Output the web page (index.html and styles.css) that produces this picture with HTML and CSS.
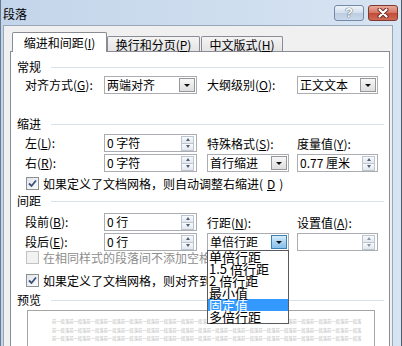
FILE: index.html
```html
<!DOCTYPE html>
<html lang="zh-CN">
<head>
  <meta charset="UTF-8" />
  <title>段落</title>
  <link rel="stylesheet" href="styles.css">
</head>
<body>
  <div class="window">
    <div class="titlebar">
      <span class="title">段落</span>
      <div class="caption">
        <span class="cap-btn help">?</span>
        <span class="cap-btn close">
          <svg width="14" height="10" viewBox="0 0 14 10"><path d="M3.5 1.5 L10.5 8.5 M10.5 1.5 L3.5 8.5" stroke="#6b2a20" stroke-width="4" stroke-linecap="round"/><path d="M3.5 1.5 L10.5 8.5 M10.5 1.5 L3.5 8.5" stroke="#fff" stroke-width="2.2" stroke-linecap="round"/></svg>
        </span>
      </div>
    </div>
    <div class="client">
      <div class="tabs">
        <div class="tab active">缩进和间距(<u>I</u>)</div>
        <div class="tab t2">换行和分页(<u>P</u>)</div>
        <div class="tab t3">中文版式(<u>H</u>)</div>
      </div>
      <div class="panel">
        <div class="group-head"><span>常规</span><i></i></div>
        <div class="grid g1">
          <label>对齐方式(<u>G</u>):</label>
          <div class="field combo w93"><span>两端对齐</span><b class="drop"></b></div>
          <label>大纲级别(<u>O</u>):</label>
          <div class="field combo w81"><span>正文文本</span><b class="drop"></b></div>
        </div>

        <div class="group-head h2"><span>缩进</span><i></i></div>
        <div class="grid g2">
          <label>左(<u>L</u>):</label>
          <div class="field spin w93"><span>0 字符</span><span class="btns"><b class="up"></b><b class="down"></b></span></div>
          <label class="above">特殊格式(<u>S</u>):</label>
          <label class="above">度量值(<u>Y</u>):</label>
          <label>右(<u>R</u>):</label>
          <div class="field spin w93"><span>0 字符</span><span class="btns"><b class="up"></b><b class="down"></b></span></div>
          <div class="field combo w82"><span>首行缩进</span><b class="drop"></b></div>
          <div class="field spin w81"><span>0.77 厘米</span><span class="btns"><b class="up"></b><b class="down"></b></span></div>
        </div>
        <div class="check-row c1"><span class="box checked"><svg width="11" height="11" viewBox="0 0 11 11"><path d="M2 5.5 L4.5 8 L9 2.5" fill="none" stroke="#3b4f77" stroke-width="1.8"/></svg></span>如果定义了文档网格，则自动调整右缩进(<u>D</u>)</div>

        <div class="group-head h3"><span>间距</span><i></i></div>
        <div class="grid g3">
          <label>段前(<u>B</u>):</label>
          <div class="field spin w93"><span>0 行</span><span class="btns"><b class="up"></b><b class="down"></b></span></div>
          <label class="above">行距(<u>N</u>):</label>
          <label class="above">设置值(<u>A</u>):</label>
          <label>段后(<u>E</u>):</label>
          <div class="field spin w93"><span>0 行</span><span class="btns"><b class="up"></b><b class="down"></b></span></div>
          <div class="field combo open w82"><span>单倍行距</span><b class="drop hot"></b>
            <div class="list">
              <div>单倍行距</div>
              <div>1.5 倍行距</div>
              <div>2 倍行距</div>
              <div>最小值</div>
              <div class="sel">固定值</div>
              <div>多倍行距</div>
            </div>
          </div>
          <div class="field spin w81"><span></span><span class="btns dim"><b class="up"></b><b class="down"></b></span></div>
        </div>
        <div class="check-row disabled"><span class="box"></span>在相同样式的段落间不添加空格(<u>C</u>)</div>
        <div class="check-row c3"><span class="box checked"><svg width="11" height="11" viewBox="0 0 11 11"><path d="M2 5.5 L4.5 8 L9 2.5" fill="none" stroke="#3b4f77" stroke-width="1.8"/></svg></span>如果定义了文档网格，则对齐到网格(<u>W</u>)</div>

        <div class="group-head h4"><span>预览</span><i></i></div>
        <div class="preview">
          <p>前一段落前一段落前一段落前一段落前一段落前一段落前一段落前一段落前一段落前一段落前一段落前一段落前一段落前一段落前一段落前一段落前一段落前一段落</p>
          <p>前一段落前一段落前一段落前一段落前一段落前一段落前一段落前一段落前一段落前一段落前一段落前一段落前一段落前一段落前一段落前一段落前一段落前一段落</p>
          <p>前一段落前一段落前一段落前一段落前一段落前一段落前一段落前一段落前一段落前一段落前一段落前一段落前一段落前一段落前一段落前一段落前一段落前一段落</p>
        </div>
      </div>
    </div>
  </div>
</body>
</html>
```

FILE: styles.css
```css
body { margin:0; background:#fff; font-family:"Noto Sans CJK SC", "Liberation Sans", sans-serif; font-size:12px; color:#000; }
u { text-decoration:underline; text-underline-offset:1px; }

.window { width:402px; height:346px; box-sizing:border-box; overflow:hidden; background:linear-gradient(to right, #c3d5ea, #d7e4f2); border-left:1px solid #6b7b8f; border-right:1px solid #4c5a6b; }

.titlebar { height:25px; display:flex; align-items:flex-start; }
.title { margin:7px 0 0 2px; line-height:14px; }
.caption { margin:5px 3px 0 auto; display:flex; gap:4px; }
.cap-btn { width:30px; height:16px; box-sizing:border-box; border-radius:3px; display:flex; align-items:center; justify-content:center; }
.help { border:1px solid #7489a6; background:linear-gradient(#eef3f9, #d3dfee 50%, #bccde2 51%, #c9d8ea); color:#fff; font-family:"Liberation Sans", sans-serif; font-weight:bold; font-size:13px; line-height:14px; text-shadow:0 0 1px #3d4a5c, 0 0 1px #3d4a5c; }
.close { border:1px solid #7d3a30; background:linear-gradient(#e9a99b, #d47565 50%, #c24a38 51%, #cf6a55); }

.client { margin-left:2px; width:390px; height:330px; box-sizing:border-box; background:#f0f0f0; border:1px solid #98a8bb; border-bottom:none; padding:0 2px 0 6px; }

.tabs { height:25px; display:flex; align-items:flex-end; padding-left:2px; }
.tab { height:15px; box-sizing:border-box; border:1px solid #898c95; border-bottom:none; border-radius:2px 2px 0 0; background:linear-gradient(#f4f4f4, #e4e4e4); display:flex; align-items:center; justify-content:center; line-height:13px; }
.tab.active { width:95px; height:20px; margin-bottom:-1px; background:#fff; position:relative; z-index:1; }
.tab.t2 { width:93px; }
.tab.t3 { width:82px; margin-left:1px; }

.panel { height:310px; box-sizing:border-box; background:#fff; border:1px solid #898c95; padding:8px 5px 0 6px; }

.group-head { height:14px; line-height:14px; display:flex; align-items:center; gap:10px; }
.group-head i { flex:1; height:1px; background:#d9e0e7; }
.h2 { margin-top:23px; }
.h3 { margin-top:4px; }
.h4 { margin-top:6px; }

.grid { display:grid; grid-template-columns:79px 103px 90px 81px; grid-auto-rows:18px; row-gap:2px; margin-left:8px; align-items:center; }
.g1 { margin-top:2px; }
.g2 { margin-top:3px; }
.g3 { margin-top:5px; }
.grid label { line-height:16px; white-space:nowrap; }
.grid label.above { align-self:end; }

.field { height:18px; box-sizing:border-box; border:1px solid #abadb3; background:#fff; display:flex; align-items:center; padding-left:2px; }
.field > span:first-child { flex:1; line-height:14px; white-space:nowrap; }
.w93 { width:93px; }
.w82 { width:82px; }
.w81 { width:81px; }

.drop { width:16px; height:14px; margin-right:1px; box-sizing:border-box; border:1px solid #979797; background:linear-gradient(#f7f7f7, #dedede); display:flex; align-items:center; justify-content:center; }
.drop::after { content:""; border-left:3px solid transparent; border-right:3px solid transparent; border-top:3px solid #111; }
.drop.hot { border-color:#3c7fb1; background:linear-gradient(#d9eefc, #a9d3f3 50%, #86bfeb); }

.btns { width:13px; height:15px; margin-right:2px; display:flex; flex-direction:column; }
.btns b { flex:1; box-sizing:border-box; border:1px solid #bcc5d0; background:linear-gradient(#f8fafc, #e3e8ee); display:flex; align-items:center; justify-content:center; }
.btns b + b { border-top:none; }
.btns .up::after { content:""; border-left:2.5px solid transparent; border-right:2.5px solid transparent; border-bottom:3px solid #4f6079; }
.btns .down::after { content:""; border-left:2.5px solid transparent; border-right:2.5px solid transparent; border-top:3px solid #4f6079; }
.btns.dim .up::after { border-bottom-color:#8a97aa; }
.btns.dim .down::after { border-top-color:#8a97aa; }

.combo.open { position:relative; }
.list { position:absolute; left:-1px; top:16px; width:82px; box-sizing:border-box; border:1px solid #5a5a5a; background:#fff; font-size:13px; line-height:12px; z-index:2; }
.list div { height:12px; padding-left:1px; white-space:nowrap; }
.list .sel { background:#3399ff; color:#fff; }

.check-row { height:13px; line-height:13px; display:flex; align-items:center; gap:4px; margin-left:9px; white-space:nowrap; }
.check-row.c1 { margin-top:5px; }
.check-row.c3 { margin-top:10px; }
.box { width:13px; height:13px; box-sizing:border-box; border:1px solid #8e8f8f; background:linear-gradient(135deg, #e0e6ee, #fafbfd); display:flex; align-items:center; justify-content:center; }
.disabled { color:#8d8d8d; }
.disabled .box { border-color:#c2c2c2; background:#f2f2f2; }

.preview { margin:3px 0 0 10px; width:348px; height:60px; box-sizing:border-box; border:1px solid #a5a5a5; background:#fff; padding:6px 0 0 24px; overflow:hidden; }
.preview p { margin:0; font-size:4.3px; line-height:8.5px; color:#b9b9b9; white-space:nowrap; }
```
